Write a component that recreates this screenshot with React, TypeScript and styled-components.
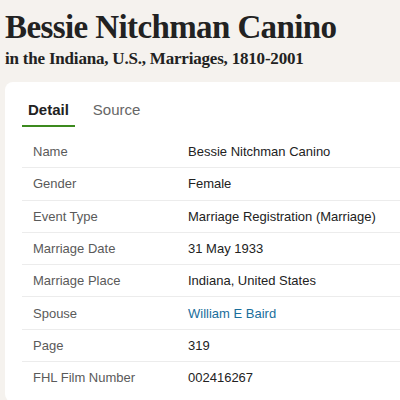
import React, { useState } from "react";
import styled, { createGlobalStyle } from "styled-components";

const GlobalStyle = createGlobalStyle`
  html, body {
    margin: 0;
    padding: 0;
    background: #f5f2ee;
    overflow: hidden;
  }
  * {
    box-sizing: border-box;
  }
`;

const Page = styled.div`
  width: 400px;
  height: 400px;
  padding: 9px 0 0 5px;
`;

const Title = styled.h1`
  margin: 0;
  font-family: "Liberation Serif", "DejaVu Serif", serif;
  font-weight: 700;
  font-size: 33px;
  line-height: 36px;
  letter-spacing: -0.6px;
  color: #222;
`;

const Subtitle = styled.div`
  margin-top: 3px;
  font-family: "Liberation Serif", "DejaVu Serif", serif;
  font-weight: 700;
  font-size: 17px;
  line-height: 22px;
  letter-spacing: -0.2px;
  color: #222;
`;

const Card = styled.div`
  margin-top: 12px;
  background: #fff;
  border-radius: 8px 0 0 8px;
  height: 320px;
  padding: 15px 0 0 17px;
  font-family: "Liberation Sans", Arial, sans-serif;
`;

const Tabs = styled.div`
  display: flex;
  gap: 12px;
  margin-bottom: 8px;
`;

const Tab = styled.div<{ active?: boolean }>`
  padding: 5px 6px 7px;
  font-size: 15px;
  line-height: 16px;
  font-weight: ${(p) => (p.active ? 700 : 400)};
  color: ${(p) => (p.active ? "#222" : "#666")};
  border-bottom: 2px solid ${(p) => (p.active ? "#3c8a1e" : "transparent")};
  cursor: pointer;
`;

const Table = styled.div`
  display: flex;
  flex-direction: column;
`;

const Row = styled.div`
  display: grid;
  grid-template-columns: 155px 1fr;
  height: 32.3px;
  align-items: center;
  padding-left: 11px;
  border-top: 1px solid #ececec;
  font-size: 13px;

  &:first-child {
    border-top: none;
  }
`;

const Label = styled.div`
  color: #5a5a5a;
`;

const Value = styled.div<{ link?: boolean }>`
  color: ${(p) => (p.link ? "#1a6e9c" : "#222")};
`;

const facts = [
  { label: "Name", value: "Bessie Nitchman Canino" },
  { label: "Gender", value: "Female" },
  { label: "Event Type", value: "Marriage Registration (Marriage)" },
  { label: "Marriage Date", value: "31 May 1933" },
  { label: "Marriage Place", value: "Indiana, United States" },
  { label: "Spouse", value: "William E Baird", link: true },
  { label: "Page", value: "319" },
  { label: "FHL Film Number", value: "002416267" },
];

export default function App() {
  const [tab, setTab] = useState("detail");
  return (
    <>
      <GlobalStyle />
      <Page>
        <Title>Bessie Nitchman Canino</Title>
        <Subtitle>in the Indiana, U.S., Marriages, 1810-2001</Subtitle>
        <Card>
          <Tabs>
            <Tab active={tab === "detail"} onClick={() => setTab("detail")}>
              Detail
            </Tab>
            <Tab active={tab === "source"} onClick={() => setTab("source")}>
              Source
            </Tab>
          </Tabs>
          <Table>
            {facts.map((f) => (
              <Row key={f.label}>
                <Label>{f.label}</Label>
                <Value link={f.link}>{f.value}</Value>
              </Row>
            ))}
          </Table>
        </Card>
      </Page>
    </>
  );
}
